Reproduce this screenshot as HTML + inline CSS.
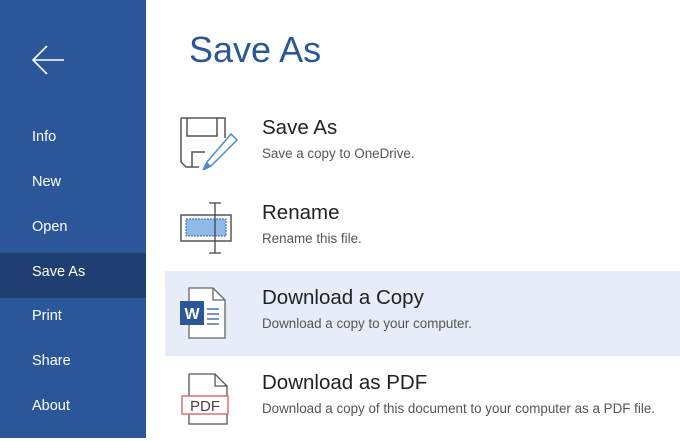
<!DOCTYPE html>
<html><head><style>
*{margin:0;padding:0;box-sizing:border-box}
body{width:680px;height:438px;overflow:hidden;background:#fff;font-family:"Liberation Sans",sans-serif;position:relative}
#side{position:absolute;left:0;top:0;width:146px;height:438px;background:#2b579a}
.nav{position:absolute;left:32px;color:#fff;font-size:14.5px;line-height:20px}
#sel{position:absolute;left:0;top:253px;width:146px;height:45px;background:#1f3f72}
h1{position:absolute;left:189px;top:29px;font-size:36px;font-weight:normal;color:#2b579a}
.row{position:absolute;left:165px;width:515px;height:85px}
.t{position:absolute;left:97px;top:15px;font-size:20.5px;color:#222}
.s{position:absolute;left:97px;top:45px;font-size:13.4px;color:#555}
svg{position:absolute}
</style></head><body>
<div id="side">
<svg style="left:30px;top:44px" width="36" height="32" viewBox="0 0 36 32"><path d="M34 16H3M17 2L3 16l14 14" fill="none" stroke="#fff" stroke-width="1.6"/></svg>
<div id="sel"></div>
<div class="nav" style="top:127px">Info</div>
<div class="nav" style="top:172px">New</div>
<div class="nav" style="top:217px">Open</div>
<div class="nav" style="top:262px">Save As</div>
<div class="nav" style="top:306px">Print</div>
<div class="nav" style="top:351px">Share</div>
<div class="nav" style="top:396px">About</div>
</div>
<h1>Save As</h1>

<div class="row" style="top:101px">
<svg style="left:14px;top:15px" width="60" height="54" viewBox="0 0 60 54"><path d="M2 2H46V22M2 2V46L7 51H20M8 2V20H38V2M13 51V36H26" fill="none" stroke="#555" stroke-width="1.5"/><path d="M52 18L58 24L32 50L24 54L28 46Z" fill="#fff" stroke="#4a8bd0" stroke-width="1.5"/><path d="M24 54L28 46L32 50Z" fill="#4a8bd0"/></svg>
<div class="t">Save As</div><div class="s">Save a copy to OneDrive.</div></div>

<div class="row" style="top:186px">
<svg style="left:14px;top:15px" width="60" height="54" viewBox="0 0 60 54"><rect x="2" y="14" width="50" height="26" fill="none" stroke="#555" stroke-width="1.5"/><rect x="7" y="18" width="40" height="17" fill="#8fb9e6" stroke="#2d6cc0" stroke-dasharray="2 1"/><path d="M30 2h12M36 2v50M30 52h12" stroke="#444" stroke-width="1.3" fill="none"/></svg>
<div class="t">Rename</div><div class="s">Rename this file.</div></div>

<div class="row" style="top:271px;background:#e6edf8">
<svg style="left:14px;top:15px" width="60" height="54" viewBox="0 0 60 54"><path d="M10 2H34L46 14V52H10Z" fill="#fff" stroke="#666" stroke-width="1.3"/><path d="M34 2V14H46" fill="none" stroke="#666" stroke-width="1.3"/><path d="M28 23h12M28 28h12M28 33h12M28 38h12" stroke="#2b579a" stroke-width="1.3"/><rect x="1" y="15" width="24" height="24" fill="#2b579a"/><text x="13" y="33" font-size="16" font-weight="bold" fill="#fff" text-anchor="middle" font-family="Liberation Sans">W</text></svg>
<div class="t">Download a Copy</div><div class="s">Download a copy to your computer.</div></div>

<div class="row" style="top:356px">
<svg style="left:14px;top:12px" width="60" height="60" viewBox="0 0 60 60"><path d="M10 40V56H48V18L36 6H10V28" fill="#fff" stroke="#555" stroke-width="1.3"/><path d="M36 6V18H48" fill="none" stroke="#555" stroke-width="1.3"/><rect x="3" y="28" width="46" height="18" fill="#fff" stroke="#e07070" stroke-width="1.5"/><text x="26" y="43" font-size="15" fill="#444" text-anchor="middle" font-family="Liberation Sans">PDF</text></svg>
<div class="t">Download as PDF</div><div class="s">Download a copy of this document to your computer as a PDF file.</div></div>
</body></html>
